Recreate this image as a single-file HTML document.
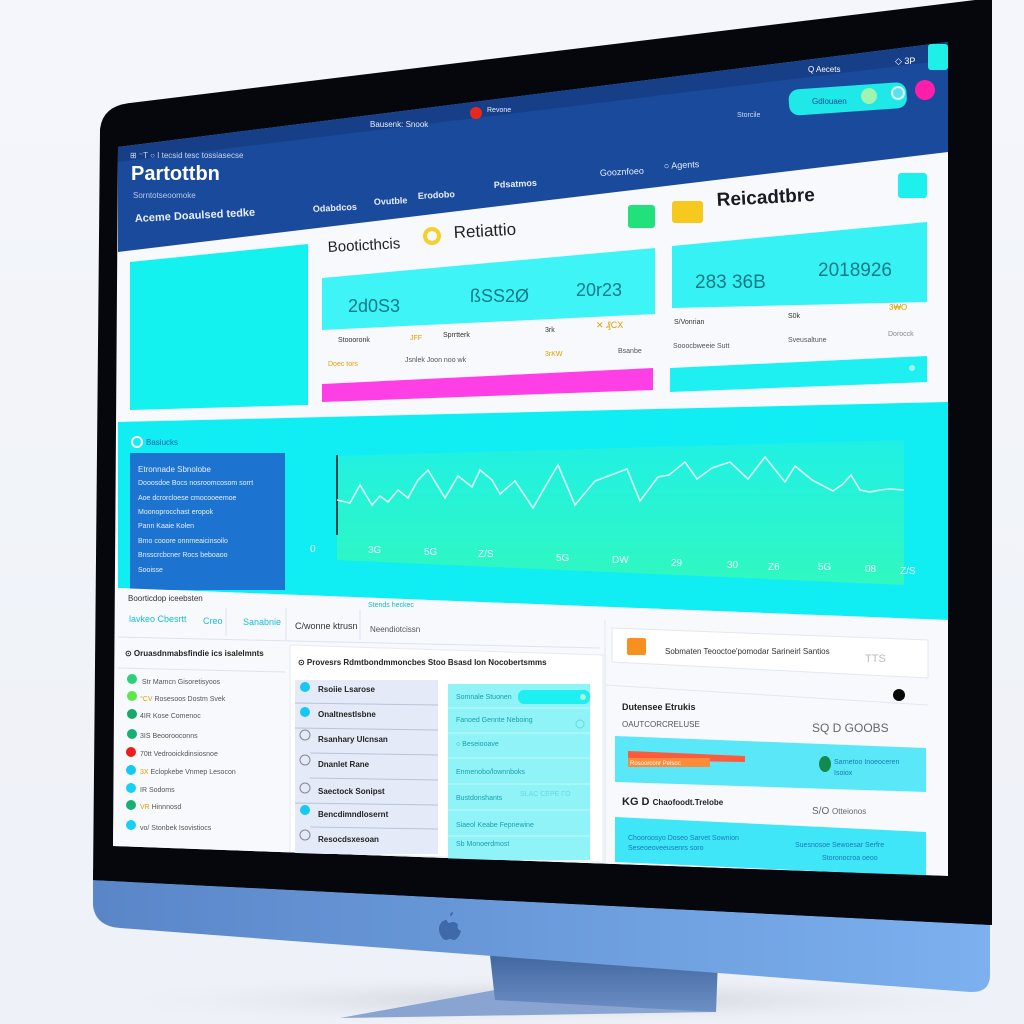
<!DOCTYPE html>
<html><head><meta charset="utf-8"><style>
html,body{margin:0;padding:0;background:#fff;}
svg{display:block}
text{font-family:"Liberation Sans",sans-serif}
</style></head><body>
<svg width="1024" height="1024" viewBox="0 0 1024 1024" xmlns="http://www.w3.org/2000/svg">
<defs>
<linearGradient id="bg" x1="0" y1="0" x2="0" y2="1"><stop offset="0" stop-color="#f4f6fb"/><stop offset="1" stop-color="#eef1f7"/></linearGradient>
<linearGradient id="chin" x1="0" y1="0" x2="1" y2="0"><stop offset="0" stop-color="#5a86c8"/><stop offset="1" stop-color="#7cb0ee"/></linearGradient>
<linearGradient id="chart" x1="0" y1="0" x2="0" y2="1"><stop offset="0" stop-color="#20f0e4"/><stop offset="1" stop-color="#30f8c0"/></linearGradient>
<linearGradient id="stand" x1="0" y1="0" x2="0" y2="1"><stop offset="0" stop-color="#42679f"/><stop offset="1" stop-color="#6d8fc6"/></linearGradient>
<radialGradient id="sh" cx="0.5" cy="0.5" r="0.5"><stop offset="0" stop-color="#c8ccd6"/><stop offset="1" stop-color="#f4f6fb" stop-opacity="0"/></radialGradient>
</defs>
<rect width="1024" height="1024" fill="url(#bg)"/>
<ellipse cx="560" cy="1000" rx="520" ry="30" fill="url(#sh)"/>
<!-- stand -->
<polygon points="340,1018 495,990 716,990 716,1012" fill="#8aa4d2"/>
<polygon points="490,955 718,960 716,1012 495,1000" fill="url(#stand)"/>
<!-- chin -->
<path d="M93,870 L990,880 L990,975 Q990,993 970,992 L120,928 Q95,926 93,905 Z" fill="url(#chin)"/>
<path d="M447,920 c-5,0 -8,4 -8,9 c0,6 4,11 7,11 c2,0 2,-1 4,-1 c2,0 2,1 4,1 c3,0 6,-5 7,-9 c-3,-1 -4,-4 -3,-6 c-1,-2 -3,-3 -5,-3 c-2,0 -3,1 -4,1 c-1,0 -1,-1 -2,-2 z M450,916 c0,-2 1,-4 3,-4 c0,2 -1,4 -3,4 z" fill="#3e6aaa"/>
<!-- bezel -->
<path d="M130,103 L975,0 L992,0 L992,925 L93,880 L100,130 Q102,106 130,103 Z" fill="#05070d"/>
<!-- screen base white -->
<polygon points="118,147 948,42 948,876 113,846" fill="#f7f9fd"/>
<!-- header blue -->
<polygon points="118,147 948,42 948,152 118,252" fill="#1a4a9c"/>
<polygon points="118,147 948,42 948,60 118,162" fill="#173f88"/>
<!-- header text -->
<text x="130" y="158" font-size="8" fill="#c9d6f0">⊞ ⁻T ○ I tecsid tesc tossiasecse</text>
<text x="131" y="180" font-size="20" font-weight="bold" fill="#fff">Partottbn</text>
<text x="133" y="198" font-size="8" fill="#b8c8ea">Sorntotseoomoke</text>
<text x="135" y="222" font-size="11" font-weight="bold" fill="#e8eefc" transform="rotate(-3 135 222)">Aceme  Doaulsed  tedke</text>
<text x="313" y="212" font-size="9" font-weight="bold" fill="#e8eefc" transform="rotate(-3 313 212)">Odabdcos</text>
<text x="374" y="205" font-size="9" font-weight="bold" fill="#e8eefc" transform="rotate(-3 374 205)">Ovutble</text>
<text x="418" y="199" font-size="9" font-weight="bold" fill="#e8eefc" transform="rotate(-3 418 199)">Erodobo</text>
<text x="494" y="188" font-size="9" font-weight="bold" fill="#e8eefc" transform="rotate(-3 494 188)">Pdsatmos</text>
<text x="600" y="176" font-size="9" fill="#e8eefc" transform="rotate(-3 600 176)">Gooznfoeo</text>
<text x="664" y="169" font-size="9" fill="#e8eefc" transform="rotate(-3 664 169)">○ Agents</text>
<text x="370" y="127" font-size="8" fill="#e8eefc">Bausenk:  Snook</text>
<circle cx="476" cy="113" r="6" fill="#e8281e"/>
<text x="487" y="112" font-size="7" fill="#e8eefc">Revone</text>
<text x="808" y="72" font-size="8" fill="#fff">Q Aecets</text>
<text x="895" y="64" font-size="9" fill="#fff">◇ 3P</text>
<rect x="928" y="44" width="20" height="26" rx="3" fill="#1ef0e8"/>
<rect x="788" y="90" width="118" height="26" rx="10" fill="#1ee8e8" transform="rotate(-4 788 90)"/>
<text x="812" y="104" font-size="8" fill="#1a4a9c">Gdlouaen</text>
<circle cx="869" cy="96" r="8" fill="#9ff5b0"/>
<circle cx="898" cy="93" r="6" fill="#5ce0f0" stroke="#d8fafc" stroke-width="2"/>
<circle cx="925" cy="90" r="10" fill="#ff1ea8"/>
<text x="737" y="117" font-size="7" fill="#cfdcf4">Storcile</text>
<!-- top white content -->
<polygon points="130,262 308,244 308,405 130,410" fill="#14f2f0"/>
<text x="328" y="252" font-size="15" fill="#222" transform="rotate(-3 328 252)">Booticthcis</text>
<circle cx="432" cy="236" r="7" fill="none" stroke="#f7cf2a" stroke-width="4"/>
<text x="454" y="238" font-size="17" fill="#222" transform="rotate(-3 454 238)">Retiattio</text>
<rect x="628" y="205" width="27" height="23" rx="3" fill="#22e07a"/>
<rect x="672" y="201" width="31" height="22" rx="3" fill="#f7c91e"/>
<text x="717" y="206" font-size="19" font-weight="bold" fill="#1a1a22" transform="rotate(-3 717 206)">Reicadtbre</text>
<rect x="898" y="173" width="29" height="25" rx="3" fill="#1ef0ee"/>
<polygon points="322,278 655,248 655,314 322,330" fill="#3ff4f6"/>
<text x="348" y="312" font-size="18" fill="#137a88">2d0S3</text>
<text x="470" y="302" font-size="18" fill="#137a88">ßSS2Ø</text>
<text x="576" y="296" font-size="18" fill="#137a88">20r23</text>
<text x="338" y="342" font-size="7" fill="#333">Stoooronk</text>
<text x="410" y="340" font-size="7" fill="#e0a000">JFF</text>
<text x="443" y="337" font-size="7" fill="#333">Sprrtterk</text>
<text x="545" y="332" font-size="7" fill="#333">3rk</text>
<text x="596" y="328" font-size="9" fill="#e0a000">✕  ₰CX</text>
<text x="328" y="366" font-size="7" fill="#e0a000">Doec tors</text>
<text x="405" y="362" font-size="7" fill="#555">Jsnlek  Joon noo wk</text>
<text x="545" y="356" font-size="7" fill="#e0a000">3rKW</text>
<text x="618" y="353" font-size="7" fill="#555">Bsanbe</text>
<polygon points="322,384 653,368 653,390 322,402" fill="#ff3fe6"/>
<polygon points="672,246 927,222 927,302 672,308" fill="#36f2f4"/>
<text x="695" y="288" font-size="19" fill="#137a88">283 36B</text>
<text x="818" y="276" font-size="19" fill="#137a88">2018926</text>
<text x="674" y="324" font-size="7" fill="#333">S/Vonrian</text>
<text x="788" y="318" font-size="7" fill="#333">S0k</text>
<text x="889" y="310" font-size="8" fill="#e0a000">3₩O</text>
<text x="673" y="348" font-size="7" fill="#555">Sooocbweeie Sutt</text>
<text x="788" y="342" font-size="7" fill="#555">Sveusaltune</text>
<text x="888" y="336" font-size="7" fill="#888">Dorocck</text>
<polygon points="670,368 927,356 927,382 670,392" fill="#1ef0f2"/>
<circle cx="912" cy="368" r="3" fill="#9ff8fb"/>
<!-- cyan band -->
<polygon points="118,422 948,402 948,620 118,588" fill="#10eef4"/>
<circle cx="137" cy="442" r="5" fill="none" stroke="#fff" stroke-width="2"/>
<text x="146" y="445" font-size="8" fill="#1a5fb0">Basiucks</text>
<rect x="130" y="453" width="155" height="137" fill="#1d74d0"/>
<g font-size="7" fill="#e6f0ff">
<text x="138" y="472" font-size="8">Etronnade Sbnolobe</text>
<text x="138" y="485">Dooosdoe Bocs nosroomcosom sorrt</text>
<text x="138" y="500">Aoe dcrorcloese cmocooeemoe</text>
<text x="138" y="514">Moonoprocchast eropok</text>
<text x="138" y="528">Pann Kaaie  Kolen</text>
<text x="138" y="543">Bmo cooore onnmeaicinsoilo</text>
<text x="138" y="557">Bnsscrcbcner Rocs beboaoo</text>
<text x="138" y="572">Sooisse</text>
</g>
<polygon points="337,456 904,440 904,585 337,560" fill="url(#chart)"/>
<line x1="337" y1="455" x2="337" y2="535" stroke="#0a4a4a" stroke-width="2"/>
<polyline fill="none" stroke="#d8fff6" stroke-width="1.6" points="337,500 350,503 360,485 372,505 380,496 388,502 398,490 408,498 418,480 428,470 445,498 458,476 472,487 480,470 492,480 500,494 515,481 533,508 545,487 558,465 575,505 595,481 627,469 640,501 658,477 669,475 685,462 697,479 712,468 730,462 748,479 765,457 785,482 795,466 812,480 833,491 843,484 851,475 860,490 870,492 880,490 890,489 904,490"/>
<g font-size="10" fill="#e8fffc">
<text x="310" y="552">0</text><text x="368" y="553">3G</text><text x="424" y="555">5G</text><text x="478" y="557">Z/S</text><text x="556" y="561">5G</text><text x="612" y="563">DW</text><text x="671" y="566">29</text><text x="727" y="568">30</text><text x="768" y="570">Z6</text><text x="818" y="570">5G</text><text x="865" y="572">08</text><text x="900" y="574">Z/S</text>
</g>
<!-- bottom area -->
<polygon points="118,588 948,620 948,876 113,846" fill="#f7f9fd"/>
<text x="128" y="601" font-size="8" fill="#333">Boorticdop iceebsten</text>
<text x="368" y="607" font-size="7" fill="#18b8c8">Stends heckec</text>
<g font-size="9">
<text x="129" y="622" fill="#18c0d0">lavkeo Cbesrtt</text>
<text x="203" y="624" fill="#18c0d0">Creo</text>
<text x="243" y="625" fill="#18c0d0">Sanabnie</text>
<text x="295" y="629" fill="#333">C/wonne ktrusn</text>
<text x="370" y="632" fill="#555" font-size="8">Neendiotcissn</text>
</g>
<line x1="118" y1="637" x2="600" y2="648" stroke="#dde4ee"/>
<line x1="226" y1="608" x2="226" y2="636" stroke="#dde4ee"/>
<line x1="286" y1="608" x2="286" y2="640" stroke="#dde4ee"/>
<line x1="360" y1="610" x2="360" y2="640" stroke="#dde4ee"/>
<!-- left list -->
<text x="125" y="656" font-size="8" font-weight="bold" fill="#222">⊙  Oruasdnmabsfindie ics isalelmnts</text>
<line x1="118" y1="668" x2="286" y2="672" stroke="#dde4ee"/>
<g font-size="7" fill="#555">
<circle cx="132" cy="679" r="5" fill="#2ad07a"/><text x="142" y="684">Str  Mamcn Gisoretisyoos</text>
<circle cx="132" cy="696" r="5" fill="#5fe84a"/><text x="140" y="701"><tspan fill="#e0a000">°CV</tspan>  Rosesoos Dostm Svek</text>
<circle cx="132" cy="714" r="5" fill="#18a868"/><text x="140" y="718">4IR   Kose Comenoc</text>
<circle cx="132" cy="734" r="5" fill="#18b070"/><text x="140" y="738">3IS   Beoorooconns</text>
<circle cx="131" cy="752" r="5" fill="#ee1c1c"/><text x="140" y="756">70tt  Vedrooickdinsiosnoe</text>
<circle cx="131" cy="770" r="5" fill="#18c8f0"/><text x="140" y="774"><tspan fill="#e0a000">3X</tspan>   Eclopkebe Vnmep Lesocon</text>
<circle cx="131" cy="788" r="5" fill="#18d0f4"/><text x="140" y="792">IR    Sodoms</text>
<circle cx="131" cy="805" r="5" fill="#18b070"/><text x="140" y="809"><tspan fill="#e0a000">VR</tspan>   Hinnnosd</text>
<circle cx="131" cy="825" r="5" fill="#18d0f4"/><text x="140" y="830">vo/   Stonbek Isovistiocs</text>
</g>
<!-- middle panel -->
<polygon points="290,645 603,655 603,862 290,852" fill="#fff" stroke="#e6ebf2"/>
<text x="298" y="665" font-size="8" font-weight="bold" fill="#222">⊙  Provesrs Rdmtbondmmoncbes Stoo Bsasd lon Nocobertsmms</text>
<g font-size="8" fill="#222" font-weight="bold">
<rect x="295" y="680" width="143" height="174" fill="#e4eaf8"/>
<circle cx="305" cy="687" r="5" fill="#18c8f0"/><text x="318" y="692">Rsoiie Lsarose</text>
<line x1="295" y1="703" x2="438" y2="705" stroke="#b8c4d8"/>
<circle cx="305" cy="712" r="5" fill="#18c8f0"/><text x="318" y="717">Onaltnestlsbne</text>
<line x1="295" y1="728" x2="438" y2="730" stroke="#b8c4d8"/>
<circle cx="305" cy="735" r="5" fill="none" stroke="#888"/><text x="318" y="742">Rsanhary Ulcnsan</text>
<line x1="310" y1="753" x2="438" y2="755" stroke="#b8c4d8"/>
<circle cx="305" cy="760" r="5" fill="none" stroke="#888"/><text x="318" y="767">Dnanlet Rane</text>
<line x1="310" y1="778" x2="438" y2="780" stroke="#b8c4d8"/>
<circle cx="305" cy="788" r="5" fill="none" stroke="#888"/><text x="318" y="794">Saectock Sonipst</text>
<line x1="295" y1="803" x2="438" y2="805" stroke="#b8c4d8"/>
<circle cx="305" cy="810" r="5" fill="#18c8f0"/><text x="318" y="817">Bencdimndlosernt</text>
<line x1="310" y1="827" x2="438" y2="829" stroke="#b8c4d8"/>
<circle cx="305" cy="835" r="5" fill="none" stroke="#888"/><text x="318" y="842">Resocdsxesoan</text>
</g>
<rect x="448" y="684" width="142" height="176" fill="#8ff3f7"/>
<rect x="518" y="690" width="72" height="14" rx="6" fill="#1ef0f2"/>
<g font-size="7" fill="#1a9fb0">
<text x="456" y="699">Somnale Stuonen</text><circle cx="583" cy="697" r="3" fill="#aaf8e8"/>
<line x1="448" y1="708" x2="590" y2="708" stroke="#bff8fa"/>
<text x="456" y="722">Fanoed Gennte Neboing</text><circle cx="580" cy="724" r="4" fill="none" stroke="#6cd8e0"/>
<line x1="448" y1="733" x2="590" y2="733" stroke="#bff8fa"/>
<text x="456" y="746">○  Beseiooave</text>
<line x1="448" y1="758" x2="590" y2="758" stroke="#bff8fa"/>
<text x="456" y="774">Enmenobo/lownnboks</text>
<line x1="448" y1="784" x2="590" y2="784" stroke="#bff8fa"/>
<text x="456" y="800">Bustdonshants</text><text x="520" y="796" font-size="7" fill="#6cd8e0">SLAC CEPE ΓO</text>
<line x1="448" y1="810" x2="590" y2="810" stroke="#bff8fa"/>
<text x="456" y="827">Siaeol Keabe Fepnewine</text>
<line x1="448" y1="836" x2="590" y2="836" stroke="#bff8fa"/>
<text x="456" y="846">Sb Monoerdmost</text>
</g>
<!-- right panel -->
<polygon points="612,628 928,640 928,678 612,662" fill="#fff" stroke="#e2e8f0"/>
<rect x="627" y="638" width="19" height="17" rx="2" fill="#f7901e"/>
<text x="665" y="654" font-size="8" fill="#333">Sobmaten Teooctoe'pomodar Sarineirl Santios</text>
<text x="865" y="662" font-size="11" fill="#bbb">TTS</text>
<line x1="605" y1="685" x2="928" y2="705" stroke="#e2e8f0"/>
<circle cx="899" cy="695" r="6" fill="#0a0a0a"/>
<text x="622" y="710" font-size="9" font-weight="bold" fill="#222">Dutensee Etrukis</text>
<text x="622" y="727" font-size="8" fill="#555">OAUTCORCRELUSE</text>
<text x="812" y="732" font-size="12" fill="#666">SQ D GOOBS</text>
<polygon points="615,736 926,748 926,792 615,782" fill="#5ae8f8"/>
<polygon points="628,751 745,756 745,762 628,760" fill="#ff5a3a"/>
<rect x="628" y="758" width="82" height="9" fill="#ff8a3a"/>
<text x="630" y="765" font-size="6" fill="#fff">Rosoorconr Pelsoc</text>
<ellipse cx="825" cy="764" rx="6" ry="8" fill="#138a4e"/>
<text x="834" y="764" font-size="7" fill="#1a7ab8">Sarnetoo Inoeoceren</text>
<text x="834" y="775" font-size="7" fill="#1a7ab8">Isoiox</text>
<text x="622" y="805" font-size="11" font-weight="bold" fill="#222">KG D <tspan font-size="8">Chaofoodt.Trelobe</tspan></text>
<text x="812" y="814" font-size="10" fill="#666">S/O <tspan font-size="8">Otteionos</tspan></text>
<polygon points="615,817 926,832 926,876 615,862" fill="#3ee6f8"/>
<text x="628" y="840" font-size="7" fill="#1a7ab8">Chooroosyo Doseo Sarvet Sownion</text>
<text x="628" y="850" font-size="7" fill="#1a7ab8">Seseoeoveeusenrs soro</text>
<text x="795" y="847" font-size="7" fill="#1a7ab8">Suesnosoe Sewoesar Serfre</text>
<text x="822" y="860" font-size="7" fill="#1a7ab8">Storonocroa oeoo</text>
<line x1="605" y1="620" x2="605" y2="862" stroke="#e2e8f0"/>
<!-- black lower bezel overlay -->
<polygon points="100,846 948,876 992,878 992,925 93,880" fill="#05070d"/>
</svg>
</body></html>
